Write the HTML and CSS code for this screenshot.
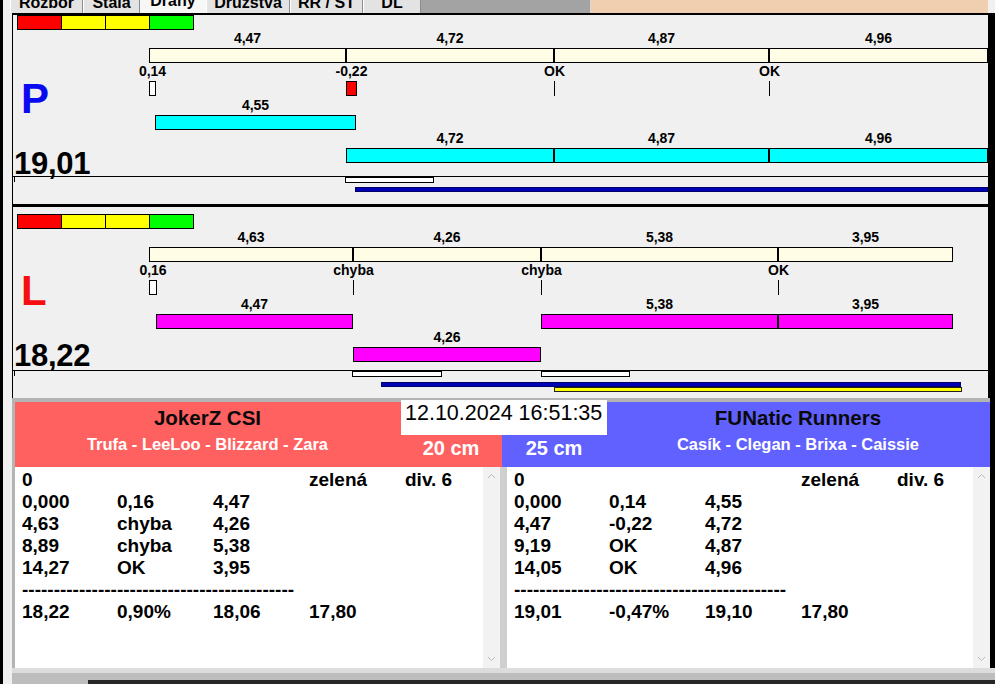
FILE: index.html
```html
<!DOCTYPE html>
<html lang="cs">
<head>
<meta charset="utf-8">
<title>Dráhy</title>
<link rel="stylesheet" href="styles.css">
</head>
<body>
<div class="app">
  <header class="tabstrip">
    <div class="tab tab-w1"><span class="tab-text">Rozbor</span></div>
    <div class="tab tab-w2"><span class="tab-text">Stála</span></div>
    <div class="tab tab-w3 tab-active"><span class="tab-text">Dráhy</span></div>
    <div class="tab tab-w4"><span class="tab-text">Družstva</span></div>
    <div class="tab tab-w5"><span class="tab-text">RR / ST</span></div>
    <div class="tab tab-w6"><span class="tab-text">DL</span></div>
    <div class="tab-fill"></div>
    <div class="tab-peach"></div>
  </header>

  <div class="frame">
    <main class="content">

      <section class="lane lane-p">
        <div class="lane-main">
          <div class="side">
            <div class="lane-letter letter-p">P</div>
            <div class="lane-score">19,01</div>
          </div>
          <div class="track">
            <div class="colorbar"><span class="cb cb-red"></span><span class="cb cb-yellow"></span><span class="cb cb-yellow"></span><span class="cb cb-green"></span></div>

            <div class="seg row-plan" style="left:136px;width:197px"><div class="seg-label">4,47</div><div class="seg-bar bar-plan"></div></div>
            <div class="seg row-plan" style="left:333px;width:208px"><div class="seg-label">4,72</div><div class="seg-bar bar-plan"></div></div>
            <div class="seg row-plan" style="left:541px;width:215px"><div class="seg-label">4,87</div><div class="seg-bar bar-plan"></div></div>
            <div class="seg row-plan" style="left:756px;width:219px"><div class="seg-label">4,96</div><div class="seg-bar bar-plan"></div></div>

            <div class="mark row-mark" style="left:136px;width:7px"><div class="mark-label">0,14</div><div class="mark-box"></div></div>
            <div class="mark row-mark" style="left:333px;width:11px"><div class="mark-label">-0,22</div><div class="mark-box mark-early"></div></div>
            <div class="mark row-mark" style="left:541px;width:1px"><div class="mark-label">OK</div><div class="mark-tick"></div></div>
            <div class="mark row-mark" style="left:756px;width:1px"><div class="mark-label">OK</div><div class="mark-tick"></div></div>

            <div class="seg row-run1" style="left:142px;width:201px"><div class="seg-label">4,55</div><div class="seg-bar bar-p"></div></div>
            <div class="seg row-run2" style="left:333px;width:208px"><div class="seg-label">4,72</div><div class="seg-bar bar-p"></div></div>
            <div class="seg row-run2" style="left:541px;width:215px"><div class="seg-label">4,87</div><div class="seg-bar bar-p"></div></div>
            <div class="seg row-run2" style="left:756px;width:219px"><div class="seg-label">4,96</div><div class="seg-bar bar-p"></div></div>
          </div>
        </div>
        <div class="foot">
          <span class="foot-tick"></span>
          <span class="foot-box" style="left:332px;width:89px"></span>
          <span class="foot-line line-blue" style="left:342px;width:633px"></span>
        </div>
      </section>

      <section class="lane lane-l">
        <div class="lane-main">
          <div class="side">
            <div class="lane-letter letter-l">L</div>
            <div class="lane-score">18,22</div>
          </div>
          <div class="track">
            <div class="colorbar"><span class="cb cb-red"></span><span class="cb cb-yellow"></span><span class="cb cb-yellow"></span><span class="cb cb-green"></span></div>

            <div class="seg row-plan" style="left:136px;width:204px"><div class="seg-label">4,63</div><div class="seg-bar bar-plan"></div></div>
            <div class="seg row-plan" style="left:340px;width:188px"><div class="seg-label">4,26</div><div class="seg-bar bar-plan"></div></div>
            <div class="seg row-plan" style="left:528px;width:237px"><div class="seg-label">5,38</div><div class="seg-bar bar-plan"></div></div>
            <div class="seg row-plan" style="left:765px;width:175px"><div class="seg-label">3,95</div><div class="seg-bar bar-plan"></div></div>

            <div class="mark row-mark" style="left:136px;width:8px"><div class="mark-label">0,16</div><div class="mark-box"></div></div>
            <div class="mark row-mark" style="left:340px;width:1px"><div class="mark-label">chyba</div><div class="mark-tick"></div></div>
            <div class="mark row-mark" style="left:528px;width:1px"><div class="mark-label">chyba</div><div class="mark-tick"></div></div>
            <div class="mark row-mark" style="left:765px;width:1px"><div class="mark-label">OK</div><div class="mark-tick"></div></div>

            <div class="seg row-run1" style="left:143px;width:197px"><div class="seg-label">4,47</div><div class="seg-bar bar-l"></div></div>
            <div class="seg row-run1" style="left:528px;width:237px"><div class="seg-label">5,38</div><div class="seg-bar bar-l"></div></div>
            <div class="seg row-run1" style="left:765px;width:175px"><div class="seg-label">3,95</div><div class="seg-bar bar-l"></div></div>
            <div class="seg row-run2" style="left:340px;width:188px"><div class="seg-label">4,26</div><div class="seg-bar bar-l"></div></div>
          </div>
        </div>
        <div class="foot">
          <span class="foot-tick"></span>
          <span class="foot-box" style="left:339px;width:90px"></span>
          <span class="foot-box" style="left:528px;width:89px"></span>
          <span class="foot-line line-blue" style="left:368px;width:580px"></span>
          <span class="foot-line line-yellow" style="left:541px;width:408px"></span>
        </div>
      </section>

      <section class="bottom">
        <div class="teams">
          <div class="team team-red">
            <div class="team-info">
              <div class="team-name">JokerZ CSI</div>
              <div class="team-dogs">Trufa - LeeLoo - Blizzard - Zara</div>
            </div>
            <div class="team-cm cm-red">20 cm</div>
          </div>
          <div class="team team-blue">
            <div class="team-cm cm-blue">25 cm</div>
            <div class="team-info">
              <div class="team-name">FUNatic Runners</div>
              <div class="team-dogs">Casík - Clegan - Brixa - Caissie</div>
            </div>
          </div>
          <div class="datebox">12.10.2024 16:51:35</div>
        </div>

        <div class="lists">
          <div class="list list-left">
            <div class="list-body">
              <div class="row"><span>0</span><span></span><span></span><span>zelená</span><span>div. 6</span></div>
              <div class="row"><span>0,000</span><span>0,16</span><span>4,47</span></div>
              <div class="row"><span>4,63</span><span>chyba</span><span>4,26</span></div>
              <div class="row"><span>8,89</span><span>chyba</span><span>5,38</span></div>
              <div class="row"><span>14,27</span><span>OK</span><span>3,95</span></div>
              <div class="row row-dash">-------------------------------------------</div>
              <div class="row"><span>18,22</span><span>0,90%</span><span>18,06</span><span>17,80</span></div>
            </div>
            <div class="scrollbar">
              <svg class="chev" width="9" height="6" viewBox="0 0 9 6"><polyline points="1,5 4.5,1.5 8,5" fill="none" stroke="#b8b8b8" stroke-width="1"/></svg>
              <svg class="chev" width="9" height="6" viewBox="0 0 9 6"><polyline points="1,1 4.5,4.5 8,1" fill="none" stroke="#b8b8b8" stroke-width="1"/></svg>
            </div>
          </div>
          <div class="list list-right">
            <div class="list-body">
              <div class="row"><span>0</span><span></span><span></span><span>zelená</span><span>div. 6</span></div>
              <div class="row"><span>0,000</span><span>0,14</span><span>4,55</span></div>
              <div class="row"><span>4,47</span><span>-0,22</span><span>4,72</span></div>
              <div class="row"><span>9,19</span><span>OK</span><span>4,87</span></div>
              <div class="row"><span>14,05</span><span>OK</span><span>4,96</span></div>
              <div class="row row-dash">-------------------------------------------</div>
              <div class="row"><span>19,01</span><span>-0,47%</span><span>19,10</span><span>17,80</span></div>
            </div>
            <div class="scrollbar">
              <svg class="chev" width="9" height="6" viewBox="0 0 9 6"><polyline points="1,5 4.5,1.5 8,5" fill="none" stroke="#b8b8b8" stroke-width="1"/></svg>
              <svg class="chev" width="9" height="6" viewBox="0 0 9 6"><polyline points="1,1 4.5,4.5 8,1" fill="none" stroke="#b8b8b8" stroke-width="1"/></svg>
            </div>
          </div>
        </div>

        <div class="statusbar"><div class="status-dark"></div></div>
      </section>

    </main>
  </div>
</div>
</body>
</html>
```

FILE: styles.css
```css
* { box-sizing: border-box; }

html, body { margin: 0; padding: 0; }

body {
  width: 995px;
  height: 684px;
  overflow: hidden;
  background: #f0f0f0;
  font-family: "Liberation Sans", Arial, sans-serif;
  color: #000;
}

.app {
  display: flex;
  flex-direction: column;
  height: 684px;
}

/* ---------- tab strip ---------- */
.tabstrip {
  flex: none;
  display: flex;
  height: 13px;
  border-left: 3px solid #000;
  padding-left: 7px;
  background: #f0f0f0;
  overflow: hidden;
}

.tab {
  flex: none;
  height: 13px;
  overflow: hidden;
  background: #e3e3e3;
  border-left: 1px solid #ffffff;
  border-right: 1px solid #8c8c8c;
  text-align: center;
}

.tab-w1 { width: 73px; }
.tab-w2 { width: 57px; }
.tab-w3 { width: 66px; }
.tab-w4 { width: 84px; }
.tab-w5 { width: 73px; }
.tab-w6 { width: 58px; }

.tab-text {
  display: block;
  margin-top: -5px;
  font-size: 16px;
  line-height: 16px;
  font-weight: bold;
  white-space: nowrap;
}

.tab-active {
  background: #f7f7f7;
  border-left-color: #f7f7f7;
  border-right-color: #f7f7f7;
}

.tab-active .tab-text { margin-top: -7px; }

.tab-fill {
  flex: none;
  width: 170px;
  height: 13px;
  background: #a3a3a3;
  border-right: 1px solid #d8d8d8;
}

.tab-peach {
  flex: none;
  width: 397px;
  height: 13px;
  background: #efcfaf;
}

/* ---------- frame ---------- */
.frame {
  flex: 1;
  min-height: 0;
  display: flex;
  border-left: 3px solid #000;
  border-right: 5px solid #000;
  padding-left: 9px;
}

.content {
  width: 978px;
  display: flex;
  flex-direction: column;
}

/* ---------- lanes ---------- */
.lane {
  flex: none;
  display: flex;
  flex-direction: column;
  background: #f0f0f0;
  border-left: 1px solid #000;
  border-right: 2px solid #000;
}

.lane-p {
  height: 194px;
  border-top: 2px solid #000;
  border-bottom: 3px solid #000;
}

.lane-l { height: 191px; }

.lane-main {
  flex: 1;
  min-height: 0;
  display: grid;
}

.side, .track { grid-area: 1 / 1; }

.side {
  display: flex;
  flex-direction: column;
  align-items: flex-start;
  padding-left: 1px;
}

.lane-letter {
  margin-top: 63px;
  margin-left: 7px;
  font-size: 42px;
  line-height: 42px;
  font-weight: bold;
}

.letter-p { color: #0a0af0; }
.letter-l { color: #f41010; }

.lane-score {
  margin-top: 28px;
  font-size: 31px;
  line-height: 31px;
  font-weight: bold;
  letter-spacing: -0.3px;
}

.track { position: relative; }
.lane-l .track { margin-top: 7px; }

.colorbar {
  display: flex;
  width: 177px;
  height: 15px;
  margin-left: 4px;
  border: 1px solid #000;
}

.cb { flex: 1; border-left: 1px solid #000; }
.cb:first-child { border-left: 0; }
.cb-red { background: #ff0000; }
.cb-yellow { background: #ffff00; }
.cb-green { background: #00ff00; }

.seg, .mark {
  position: absolute;
  display: flex;
  flex-direction: column;
}

.mark { align-items: center; }

.row-plan { top: 15px; }
.row-mark { top: 48px; }
.row-run1 { top: 82px; }
.row-run2 { top: 115px; }

.seg-label, .mark-label {
  height: 16px;
  line-height: 16px;
  font-size: 14px;
  font-weight: bold;
  text-align: center;
  white-space: nowrap;
}

.mark-label { flex: none; width: 80px; }

.seg-bar {
  margin-top: 2px;
  height: 15px;
  border: 1px solid #000;
}

.bar-plan { background: #fffde6; }
.bar-p { background: #00ffff; }
.bar-l { background: #ff00ff; }

.mark-box {
  align-self: stretch;
  margin-top: 2px;
  height: 15px;
  border: 1px solid #000;
  background: #ffffff;
}

.mark-early { background: #ff0000; }

.mark-tick {
  margin-top: 2px;
  width: 1px;
  height: 15px;
  background: #000;
}

/* lane foot */
.foot {
  flex: none;
  position: relative;
  height: 28px;
  border-top: 1px solid #000;
}

.foot-tick {
  position: absolute;
  left: 1px;
  top: 0;
  width: 1px;
  height: 5px;
  background: #000;
}

.foot-box {
  position: absolute;
  top: 0;
  height: 6px;
  border: 1px solid #000;
  background: #fff;
}

.foot-line {
  position: absolute;
  height: 5px;
}

.line-blue {
  top: 11px;
  background: #0000b4;
  border: 1px solid #00006a;
}

.lane-p .line-blue { top: 10px; }

.line-yellow {
  top: 16px;
  background: #ffff00;
  border: 1px solid #202020;
}

/* ---------- bottom section ---------- */
.bottom {
  flex: 1;
  min-height: 0;
  display: flex;
  flex-direction: column;
  padding-top: 4px;
  padding-left: 3px;
  background: #b4b4b4;
}

.teams {
  position: relative;
  flex: none;
  display: grid;
  grid-template-columns: 487px 488px;
  height: 65px;
}

.team { display: flex; }
.team-red { background: #ff6161; }
.team-blue { background: #6161ff; }

.team-info {
  flex: 1;
  padding-top: 4px;
  text-align: center;
  white-space: nowrap;
}

.team-name {
  font-size: 20.5px;
  line-height: 24px;
  font-weight: bold;
  color: #0a0a0a;
}

.team-dogs {
  margin-top: 4px;
  font-size: 16.5px;
  line-height: 20px;
  font-weight: bold;
  color: #ffffff;
}

.team-cm {
  flex: none;
  padding-top: 34px;
  font-size: 20px;
  line-height: 24px;
  font-weight: bold;
  color: #ffffff;
  text-align: center;
}

.cm-red { width: 102px; }
.cm-blue { width: 104px; }

.datebox {
  position: absolute;
  left: 386px;
  top: -2px;
  width: 206px;
  height: 35px;
  padding: 1px 0 0 4px;
  background: #ffffff;
  font-size: 21.5px;
  line-height: 24px;
  white-space: nowrap;
}

.lists {
  flex: none;
  display: flex;
  gap: 7px;
  height: 201px;
  background: #cfcfcf;
}

.list {
  display: flex;
  background: #ffffff;
}

.list-left { width: 485px; }
.list-right { width: 483px; }

.list-body {
  flex: 1;
  padding: 2px 0 0 7px;
  font-size: 19px;
  line-height: 22px;
  font-weight: bold;
}

.row {
  display: grid;
  grid-template-columns: 95px 96px 96px 96px auto;
  height: 22px;
  white-space: pre;
}

.row-dash { display: block; }

.scrollbar {
  flex: none;
  width: 17px;
  display: flex;
  flex-direction: column;
  justify-content: space-between;
  align-items: center;
  padding: 6px 0;
  background: #f2f2f2;
}

.chev { display: block; }

.statusbar {
  flex: 1;
  border-top: 5px solid #dcdcdc;
  background: #bdbdbd;
  margin-left: -3px;
  margin-right: -5px;
  padding-top: 7px;
}

.status-dark {
  margin-left: 76px;
  height: 4px;
  background: #262626;
}
```
